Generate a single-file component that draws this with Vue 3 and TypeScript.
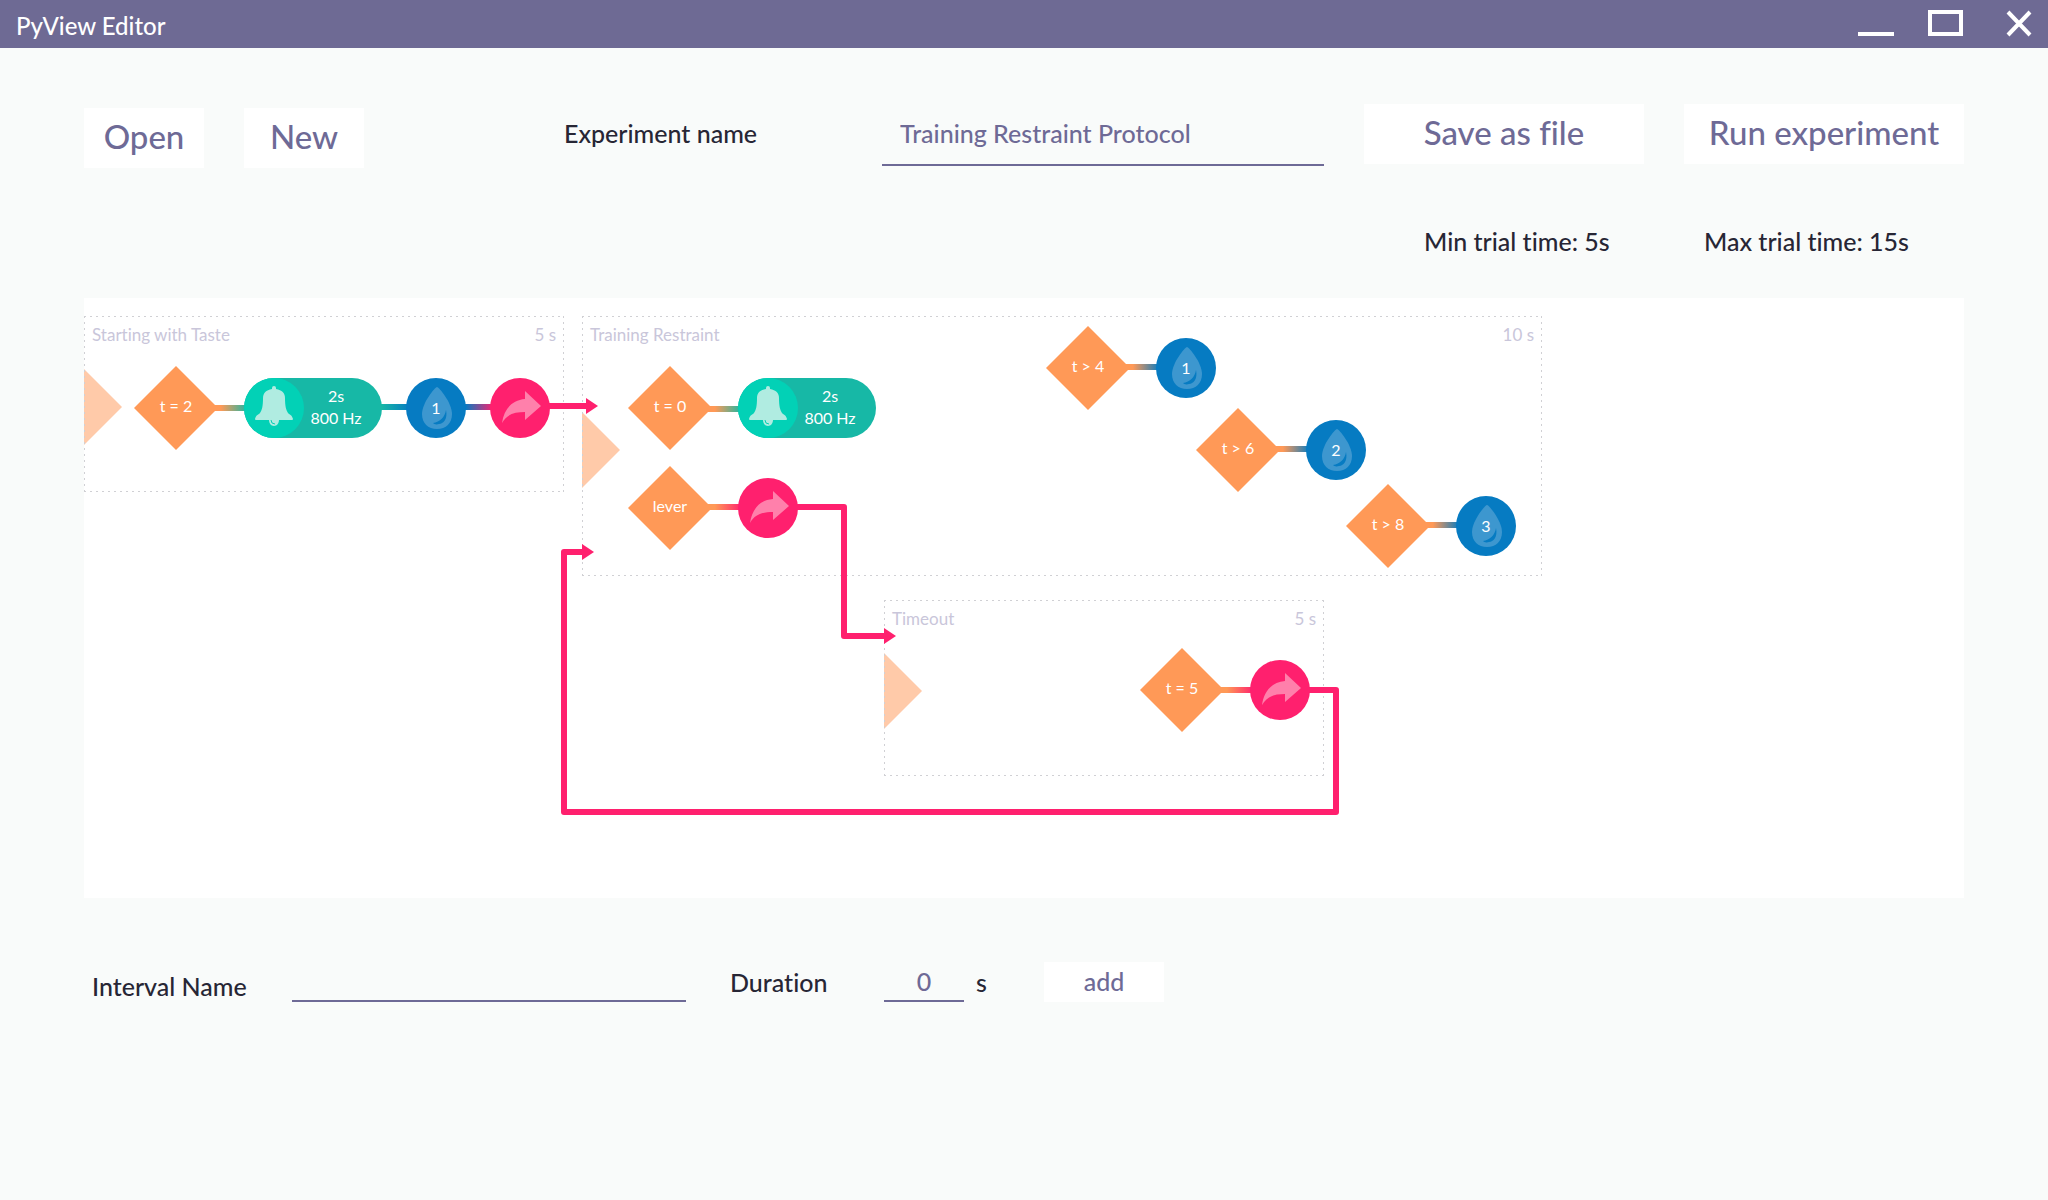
<script setup lang="ts">
import { ref } from 'vue'

type Point = { x: number; y: number }
type Interval = Point & { name: string; duration: string; width: number; height: number; startY: number }
type Trigger = Point & { label: string }
type Tone = Point & { length: string; frequency: string }
type Valve = Point & { port: number }
type Link = Point & { width: number; kind: string }

const experimentName = ref('Training Restraint Protocol')
const intervalName = ref('')
const duration = ref('0')

const intervals: Interval[] = [
  { name: 'Starting with Taste', duration: '5 s', x: 0, y: 18, width: 480, height: 176, startY: 53 },
  { name: 'Training Restraint', duration: '10 s', x: 498, y: 18, width: 960, height: 260, startY: 96 },
  { name: 'Timeout', duration: '5 s', x: 800, y: 302, width: 440, height: 176, startY: 53 },
]

// Node positions are the centres of their shapes on the canvas.
const triggers: Trigger[] = [
  { label: 't = 2', x: 92, y: 110 },
  { label: 't = 0', x: 586, y: 110 },
  { label: 'lever', x: 586, y: 210 },
  { label: 't > 4', x: 1004, y: 70 },
  { label: 't > 6', x: 1154, y: 152 },
  { label: 't > 8', x: 1304, y: 228 },
  { label: 't = 5', x: 1098, y: 392 },
]

const tones: Tone[] = [
  { length: '2s', frequency: '800 Hz', x: 190, y: 110 },
  { length: '2s', frequency: '800 Hz', x: 684, y: 110 },
]

const valves: Valve[] = [
  { port: 1, x: 352, y: 110 },
  { port: 1, x: 1102, y: 70 },
  { port: 2, x: 1252, y: 152 },
  { port: 3, x: 1402, y: 228 },
]

const jumps: Point[] = [
  { x: 436, y: 110 },
  { x: 684, y: 210 },
  { x: 1196, y: 392 },
]

const links: Link[] = [
  { kind: 'trigger-tone', x: 130, y: 107, width: 34 },
  { kind: 'tone-valve', x: 294, y: 106, width: 32 },
  { kind: 'valve-jump', x: 378, y: 106, width: 32 },
  { kind: 'trigger-tone', x: 624, y: 108, width: 34 },
  { kind: 'trigger-jump', x: 624, y: 206, width: 34 },
  { kind: 'trigger-valve', x: 1042, y: 66, width: 34 },
  { kind: 'trigger-valve', x: 1192, y: 148, width: 34 },
  { kind: 'trigger-valve', x: 1342, y: 224, width: 34 },
  { kind: 'trigger-jump', x: 1136, y: 389, width: 34 },
]

const routes = [
  'M460 108H504',
  'M710 209H760V338H802',
  'M1222 392H1252V514H480V254H500',
]
const arrowHeads = ['M502 100L514 108L502 116Z', 'M800 330L812 338L800 346Z', 'M498 246L510 254L498 262Z']

const at = (p: Point) => ({ left: `${p.x}px`, top: `${p.y}px` })
</script>

<template>
  <div class="window">
    <header class="titlebar">
      <h1>PyView Editor</h1>
      <div class="controls">
        <button type="button" aria-label="Minimize">
          <svg width="36" height="28" viewBox="0 0 36 28"><path d="M0 24H36" /></svg>
        </button>
        <button type="button" aria-label="Maximize">
          <svg width="36" height="28" viewBox="0 0 36 28"><rect x="2" y="2" width="31" height="22" /></svg>
        </button>
        <button type="button" aria-label="Close">
          <svg width="26" height="28" viewBox="0 0 26 28"><path d="M2 2L24 25M24 2L2 25" /></svg>
        </button>
      </div>
    </header>

    <main>
      <div class="toolbar">
        <div class="files">
          <button type="button" class="btn small">Open</button>
          <button type="button" class="btn small">New</button>
        </div>
        <div class="experiment">
          <label for="experiment-name">Experiment name</label>
          <input id="experiment-name" v-model="experimentName" type="text" />
        </div>
        <div class="actions">
          <button type="button" class="btn wide">Save as file</button>
          <button type="button" class="btn wide">Run experiment</button>
        </div>
      </div>

      <div class="trial-times">
        <p>Min trial time: 5s</p>
        <p>Max trial time: 15s</p>
      </div>

      <section class="canvas" aria-label="Protocol">
        <section
          v-for="interval in intervals"
          :key="interval.name"
          class="interval"
          :style="{ ...at(interval), width: `${interval.width}px`, height: `${interval.height}px` }"
        >
          <svg class="outline" :width="interval.width" :height="interval.height">
            <path class="start" :d="`M0 ${interval.startY}l38 38l-38 38z`" />
            <path class="dashes" :d="`M0 .5H${interval.width}M0 ${interval.height - 0.5}H${interval.width}M.5 0V${interval.height}M${interval.width - 0.5} 0V${interval.height}`" />
          </svg>
          <h2>{{ interval.name }}</h2>
          <span>{{ interval.duration }}</span>
        </section>

        <div v-for="(link, i) in links" :key="`link-${i}`" class="link" :class="link.kind" :style="{ ...at(link), width: `${link.width}px` }"></div>

        <svg class="routes" width="1300" height="600">
          <path v-for="d in routes" :key="d" class="route" :d="d" />
          <path v-for="d in arrowHeads" :key="d" class="head" :d="d" />
        </svg>

        <div v-for="(trigger, i) in triggers" :key="`trigger-${i}`" class="node trigger" :style="at(trigger)">
          <svg width="84" height="84" viewBox="0 0 84 84"><path d="M42 0L84 42L42 84L0 42Z" /></svg>
          <span>{{ trigger.label }}</span>
        </div>

        <div v-for="(tone, i) in tones" :key="`tone-${i}`" class="node tone" :style="at(tone)">
          <svg width="60" height="60" viewBox="0 0 60 60">
            <circle cx="30" cy="30" r="30" fill="#02d1b6" />
            <path
              fill="#b0ece1"
              d="M28 11V10Q28 8 30 8Q32 8 32 10V11C38 12 41 15 41 20C41 28 42 32 44 35C46 37 48 37 49 41Q49 42 48 42H35C35 45 33 48 30 48C27 48 25 45 25 42H12Q11 42 11 41C12 37 14 37 16 35C18 32 19 28 19 20C19 15 22 12 28 11Z"
            />
            <path d="M27 42A4 4 0 0 0 31 46" fill="none" stroke="#02d1b6" stroke-width="1" />
          </svg>
          <p>{{ tone.length }}<br />{{ tone.frequency }}</p>
        </div>

        <div v-for="(valve, i) in valves" :key="`valve-${i}`" class="node valve" :style="at(valve)">
          <svg width="60" height="60" viewBox="0 0 60 60">
            <circle cx="30" cy="30" r="30" fill="#067bc2" />
            <path fill="#3d97cf" d="M31 9C33 9 46 25 46 36C46 45 40 51 31 51C22 51 16 45 16 36C16 25 29 9 31 9Z" />
            <path fill="#067bc2" d="M40 32C42 41 37 46 33 46C30 47 28 46 27 45C34 44 39 39 40 32Z" />
          </svg>
          <span>{{ valve.port }}</span>
        </div>

        <div v-for="(jump, i) in jumps" :key="`jump-${i}`" class="node jump" :style="at(jump)">
          <svg width="60" height="60" viewBox="0 0 60 60">
            <circle cx="30" cy="30" r="30" fill="#ff206e" />
            <path fill="#ff80ab" d="M12 45C14 31 22 22 35 21V13L51 28L35 42V34C25 34 17 36 12 45Z" />
          </svg>
        </div>
      </section>

      <form class="new-interval" @submit.prevent>
        <label class="interval-label" for="interval-name">Interval Name</label>
        <input id="interval-name" v-model="intervalName" class="interval-input" type="text" />
        <label class="duration-label" for="duration">Duration</label>
        <input id="duration" v-model="duration" class="duration-input" type="text" inputmode="numeric" />
        <span class="unit">s</span>
        <button type="submit" class="btn add">add</button>
      </form>
    </main>
  </div>
</template>

<style>
body {
  background: #f9fbfa;
}
</style>

<style scoped>
.window {
  min-height: 100vh;
  background: #f9fbfa;
  color: #272635;
  font-family: Lato, 'Open Sans', sans-serif;
  font-size: 25px;
  font-weight: 500;
  font-variant-ligatures: none;
  line-height: 32px;
}

h1,
h2,
p {
  margin: 0;
  font-size: inherit;
  font-weight: inherit;
}

button,
input {
  box-sizing: border-box;
  border: 0;
  border-radius: 0;
  padding: 0;
  background: none;
  color: #6e6a96;
  font: inherit;
  font-variant-ligatures: none;
}

.titlebar {
  display: flex;
  align-items: center;
  justify-content: space-between;
  height: 48px;
  padding: 0 16px;
  background: #6e6a94;
  color: #fff;
}

.titlebar h1 {
  padding-top: 4px;
  font-size: 24px;
}

.controls {
  display: flex;
  gap: 34px;
}

.controls button:last-child {
  margin-left: 8px;
}

.controls svg {
  display: block;
  fill: none;
  stroke: #fff;
  stroke-width: 4;
}

main {
  padding: 56px 84px;
}

.toolbar {
  display: flex;
  align-items: flex-start;
}

.files,
.actions {
  display: flex;
  gap: 40px;
}

.files {
  margin-top: 4px;
}

.btn {
  height: 60px;
  padding-bottom: 4px;
  background: #fff;
  font-size: 33px;
}

.small {
  width: 120px;
}

.wide {
  width: 280px;
}

.experiment {
  display: flex;
  flex: 1;
  align-items: center;
  margin: 0 40px 0 200px;
}

.experiment label {
  width: 318px;
  padding-bottom: 4px;
}

.experiment input {
  flex: 1;
  min-width: 0;
  height: 62px;
  padding: 0 18px 2px;
  border-bottom: 2px solid #6e6a96;
}

.trial-times {
  display: flex;
  justify-content: flex-end;
  margin: 57px 0 41px;
}

.trial-times p {
  width: 280px;
}

.trial-times p:last-child {
  width: 260px;
}

.canvas {
  position: relative;
  min-height: 600px;
  overflow: hidden;
  background: #fff;
  font-size: 16px;
  font-weight: 400;
  line-height: 22px;
}

.interval {
  position: absolute;
  box-sizing: border-box;
  display: flex;
  justify-content: space-between;
  padding: 8px;
  color: #c9c6da;
  font-size: 17px;
}

.outline {
  position: absolute;
  inset: 0;
}

.start {
  fill: #ffcaa9;
}

.dashes {
  fill: none;
  stroke: #d0d0d4;
  stroke-width: 1;
  stroke-dasharray: 2 4;
}

.link {
  position: absolute;
  height: 6px;
}

.trigger-tone {
  background: linear-gradient(90deg, #ff9957 20%, #17b8a6);
}

.tone-valve {
  background: linear-gradient(90deg, #17b8a6 10%, #067bc2);
}

.valve-jump {
  background: linear-gradient(90deg, #067bc2 10%, #ff206e);
}

.trigger-jump {
  background: linear-gradient(90deg, #ff9957 20%, #ff206e);
}

.trigger-valve {
  background: linear-gradient(90deg, #ff9957 20%, #067bc2);
}

.routes {
  position: absolute;
  inset: 0;
}

.route {
  fill: none;
  stroke: #ff206e;
  stroke-width: 6;
  stroke-linejoin: round;
}

.head {
  fill: #ff206e;
}

.node {
  position: absolute;
  display: grid;
  place-items: center;
  color: #fff;
}

.node svg {
  display: block;
}

.node svg,
.node span {
  grid-area: 1 / 1;
}

.trigger {
  margin: -42px 0 0 -42px;
}

.trigger path {
  fill: #ff9957;
}

.trigger span {
  padding-bottom: 4px;
}

.tone,
.valve,
.jump {
  margin: -30px 0 0 -30px;
}

.tone {
  grid-template-columns: 60px 64px;
  width: 138px;
  height: 60px;
  border-radius: 30px;
  background: #17b8a6;
  text-align: center;
}

.tone p {
  padding-bottom: 2px;
}

.new-interval {
  display: flex;
  align-items: flex-end;
  margin-top: 64px;
}

.interval-label {
  width: 200px;
  padding-left: 8px;
}

.new-interval input {
  height: 40px;
  border-bottom: 2px solid #6e6a96;
}

.interval-input {
  width: 394px;
}

.duration-label,
.unit {
  padding-bottom: 4px;
}

.duration-label {
  width: 154px;
  margin-left: 44px;
}

.duration-input {
  width: 80px;
  text-align: center;
}

.unit {
  width: 68px;
  margin-left: 12px;
}

.add {
  width: 120px;
  height: 40px;
  padding-bottom: 2px;
  font-size: 25px;
}
</style>
